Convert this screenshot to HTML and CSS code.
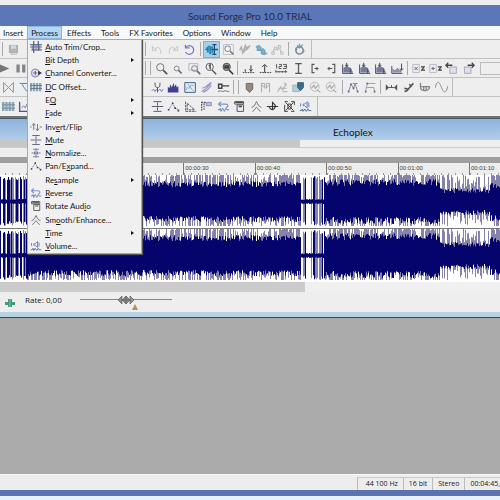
FILE: index.html
```html
<!DOCTYPE html>
<html lang="en">
<head>
<meta charset="utf-8">
<title>Sound Forge Pro 10.0 TRIAL</title>
<link rel="stylesheet" href="styles.css">
</head>
<body>
<svg class="sprite" aria-hidden="true">
    <symbol id="save" viewBox="0 0 16 16"><path d="M3 3h10v9H3z" fill="#b4b7ba" stroke="#a4a7aa"/><path d="M5 3h6v4H5z" fill="#dadcdd" stroke="none"/><path d="M5 14h7" stroke="#aaa" stroke-dasharray="2 1"/></symbol>
    <symbol id="play" viewBox="0 0 16 16"><path d="M2 3l12 5-12 5z" fill="#777" stroke="none"/></symbol>
    <symbol id="pause" viewBox="0 0 16 16"><path d="M3 3h4v10H3zM10 3h4v10h-4z" fill="#808388" stroke="none"/></symbol>
    <symbol id="mirror" viewBox="0 0 16 16"><path d="M2 2v12l6-6zM14 2v12L8 8z" stroke="#8a8f98"/></symbol>
    <symbol id="tri" viewBox="0 0 16 16"><path d="M2 3h12M5 4l5 8h5" stroke="#5d7db0"/></symbol>
    <symbol id="undo" viewBox="0 0 16 16"><path d="M3 4v5h5L3 4zM6 7c4-3 8-1 7 6" stroke="#c3c6c9"/></symbol>
    <symbol id="redo" viewBox="0 0 16 16"><path d="M13 4v5H8l5-5zM10 7c-4-3-8-1-7 6" stroke="#c3c6c9"/></symbol>
    <symbol id="repeat" viewBox="0 0 16 16"><path d="M4 5c4-4 10 0 9 5-2 5-8 5-10 1M3 2v4h5" stroke="#7779c0" stroke-width="1.5"/></symbol>
    <symbol id="edit" viewBox="0 0 16 16"><path d="M0 8h2V6h1v5h1V4h2v9h1V5h2v7h1" stroke="#2583b4" stroke-width="1.5"/><path d="M9 2h5M9 14h5M11.500 2v12M8 8h8" stroke="#28506e" stroke-width="1.6"/></symbol>
    <symbol id="magbox" viewBox="0 0 16 16"><path d="M2 2h12v12H2z" stroke="#bcbec2" fill="#f4f4f5"/><circle cx="7" cy="7" r="3.500" stroke="#777c85"/><path d="M10 10l4 4" stroke="#777c85" stroke-width="2"/></symbol>
    <symbol id="pencil" viewBox="0 0 16 16"><path d="M2 9l2-4 2 7 3-9 2 5 4-5M5 13l8-9" stroke="#aaaeb2" stroke-width="1.700"/></symbol>
    <symbol id="event" viewBox="0 0 16 16"><path d="M1 5h2V3v6h2V2v7h2V4v5h3M6 9h2V7v6h2V6v8h2V8v5h3" stroke="#6fa5c2" stroke-width="1.800"/></symbol>
    <symbol id="env" viewBox="0 0 16 16"><path d="M2 12l3-6 3 3 2-6 2 8 3 2" stroke="#b0b3b6"/><path d="M1 11h3v3H1zM4 5h3v3H4zM9 3h3v3H9zM12 11h3v3h-3z" stroke="#a6a9ac" fill="#eee" stroke-width=".8"/></symbol>
    <symbol id="gear" viewBox="0 0 16 16"><circle cx="8" cy="9" r="4.500" stroke="#8288a4" stroke-width="2"/><path d="M8 1v5M5 3l3 3 4-4M12 12l2-3M3 6l2 3" stroke="#7398a4" stroke-width="1.500"/></symbol>
    <symbol id="zoom" viewBox="0 0 16 16"><circle cx="6.500" cy="6.500" r="4.500" stroke="#6f747c"/><path d="M10 10l5 5" stroke="#555" stroke-width="2"/></symbol>
    <symbol id="zooms" viewBox="0 0 16 16"><circle cx="7" cy="8" r="3" stroke="#80858c"/><path d="M9 10l4 4" stroke="#666" stroke-width="1.800"/></symbol>
    <symbol id="zoomsel" viewBox="0 0 16 16"><path d="M1 2h11v8H1z" stroke="#b0a9c5" stroke-width="1"/><circle cx="8" cy="8" r="3.500" stroke="#777c88"/><path d="M11 11l4 4" stroke="#666" stroke-width="2"/></symbol>
    <symbol id="zoom1" viewBox="0 0 16 16"><circle cx="7" cy="6" r="4.500" stroke="#5d6066"/><path d="M6 5l1.500-1.500V9M10 10l5 5" stroke="#444" stroke-width="1.600"/></symbol>
    <symbol id="zoom2" viewBox="0 0 16 16"><circle cx="7" cy="6" r="4.500" stroke="#4c4f54" fill="#999"/><path d="M4 5h6M4 7h6M10 10l5 5" stroke="#333" stroke-width="1.800"/></symbol>
    <symbol id="mark1" viewBox="0 0 16 16"><path d="M1 13h14" stroke="#444" stroke-dasharray="2 1"/><path d="M11 4v8M9 9l2 2 2-2M4 9v3" stroke="#333"/></symbol>
    <symbol id="mark2" viewBox="0 0 16 16"><path d="M1 13h14" stroke="#444" stroke-dasharray="2 1"/><path d="M7 13V4M4 6l3-3 3 3" stroke="#333"/></symbol>
    <symbol id="count" viewBox="0 0 16 16"><path d="M1 4l1-1v5M5 3h3v2.500H5V8h3M10 3h4v5h-4M11 5.500h3" stroke="#555"/><path d="M1 12h14M1 10v3M5 11v2M9 11v2M13 10v3" stroke="#555"/></symbol>
    <symbol id="ibeam" viewBox="0 0 16 16"><path d="M4 2h8M4 14h8M8 2v12" stroke="#555" stroke-width="1.500"/></symbol>
    <symbol id="brl" viewBox="0 0 16 16"><path d="M8 3H5v10h3M8 8h5M11 6v4" stroke="#555" stroke-width="1.400"/></symbol>
    <symbol id="brr" viewBox="0 0 16 16"><path d="M9 3h3v10H9M9 8H3M5 6v4" stroke="#555" stroke-width="1.400"/></symbol>
    <symbol id="hist" viewBox="0 0 16 16"><path d="M3 13V7l2-1 2-2 2 2 3 1 1 3 2 3z" fill="#777b99" stroke="none"/><path d="M2 3v11h13M7 1v5M5 4h4M12 8v6" stroke="#44485c"/></symbol>
    <symbol id="hist2" viewBox="0 0 16 16"><path d="M2 13V8l3 2 3-3 3 3 2-3v6z" fill="#8d91ac" stroke="none"/><path d="M1 5v9h13M13 2v8M11 8l2 2 2-2" stroke="#44485c"/></symbol>
    <symbol id="xz" viewBox="0 0 16 16"><path d="M1 3h8v10H1z" stroke="#b9bcc9"/><path d="M3 6l4 4M7 6l-4 4" stroke="#667"/><path d="M11 6h4l-3 4h4" stroke="#444" stroke-width="1.500"/></symbol>
    <symbol id="pz" viewBox="0 0 16 16"><path d="M1 3h8v10H1z" stroke="#b9bcc9"/><path d="M3 8h4M5 6v4" stroke="#667"/><path d="M11 6h4l-3 4h4" stroke="#444" stroke-width="1.500"/></symbol>
    <symbol id="boxl" viewBox="0 0 16 16"><path d="M6 6h8v8H6z" stroke="#aab" fill="#dde0e8"/><path d="M1 4h8M4 1L1 4l3 3" stroke="#444" stroke-width="1.600"/></symbol>
    <symbol id="boxr" viewBox="0 0 16 16"><path d="M3 6h8v8H3z" stroke="#aab" fill="#dde0e8"/><path d="M7 4h8M12 1l3 3-3 3" stroke="#444" stroke-width="1.600"/></symbol>
    <symbol id="tuner" viewBox="0 0 16 16"><path d="M5 2v3c0 4 6 4 6 0V2M8 8v6" stroke="#555"/><path d="M1 12l2-2 2 3 2-3M9 12l2-2 2 3 2-3" stroke="#6c74b8"/></symbol>
    <symbol id="spect" viewBox="0 0 16 16"><path d="M1 14V7l2 2 1-5 2 4 2-6 1 5 2-3 1 4 2-2v8z" fill="#40418e" stroke="none"/></symbol>
    <symbol id="scope" viewBox="0 0 16 16"><path d="M1 2h13v12H1z" stroke="#416180" fill="#e0edf5"/><path d="M3 11c1-7 3 1 4-3s3-3 5-2M5 4l6 8" stroke="#77a5cb"/></symbol>
    <symbol id="stack" viewBox="0 0 16 16"><path d="M2 13l5-3 7-8M3 9l4-2 6-5M4 14l5-3 5-6" stroke="#9b96c8" stroke-width="1.500"/></symbol>
    <symbol id="hammer" viewBox="0 0 16 16"><path d="M2 4h4v5H2zM6 6h9" stroke="#444" stroke-width="1.800"/><path d="M1 13l3-1 3 1 3-1 5 1" stroke="#53859f"/></symbol>
    <symbol id="shield" viewBox="0 0 16 16"><path d="M4 3h8v7l-4 4-4-4z" fill="#95897d" stroke="#756a62"/></symbol>
    <symbol id="gate" viewBox="0 0 16 16"><path d="M3 14V3h4v6L4 5M13 14V3H9v6l3-4" stroke="#aaa"/></symbol>
    <symbol id="sparks" viewBox="0 0 16 16"><path d="M2 13l4-6 2 4 5-8M3 9h10M8 13h6M10 2l3 4" stroke="#b8bbbd" stroke-width="1.600"/></symbol>
    <symbol id="shield2" viewBox="0 0 16 16"><path d="M1 5h8v8H1z" fill="#b9cbd6" stroke="#9eb4bf"/><path d="M7 2h7v6l-3.500 4L7 8z" fill="#396f8b" stroke="#33627d"/></symbol>
    <symbol id="disc" viewBox="0 0 16 16"><circle cx="7" cy="7" r="5.500" stroke="#bbb"/><path d="M3 9l3-4 2 4 3-4M10 11l4 3" stroke="#aaa" stroke-width="1.500"/></symbol>
    <symbol id="nodes" viewBox="0 0 16 16"><path d="M2 13l3-9 3 5 2-6 3 10M7 3h6" stroke="#85899c"/><path d="M1 12h2v2H1zM4 3h2v2H4zM7 8h2v2H7zM12 12h2v2h-2z" fill="#596080" stroke="none"/></symbol>
    <symbol id="nodes2" viewBox="0 0 16 16"><path d="M2 13l2-10h10M4 8h8l1 5" stroke="#9a9da6"/><path d="M1 12h2v2H1zM3 2h2v2H3zM12 12h2v2h-2z" fill="#596080" stroke="none"/></symbol>
    <symbol id="span" viewBox="0 0 16 16"><path d="M1 4v8l4-4zM15 4v8l-4-4z" fill="#555" stroke="none"/><path d="M5 8h6M8 5v3" stroke="#555"/></symbol>
    <symbol id="diag" viewBox="0 0 16 16"><path d="M3 13l3-1 6-7 2-2M3 9l4 1M9 4l3 3" stroke="#555" stroke-width="2"/></symbol>
    <symbol id="midi" viewBox="0 0 16 16"><path d="M3 2v5c0 6 9 6 11 2V7H4M7 7v4M10 7v4" stroke="#808388" stroke-width="1.500"/></symbol>
    <symbol id="sine" viewBox="0 0 16 16"><path d="M0 9C3-4 6 3 8 8s5 10 8-2" stroke="#85888c"/></symbol>
    <symbol id="lines" viewBox="0 0 16 16"><path d="M3 2h10M1 8h14M3 14h10M8 3v4M8 9v4" stroke="#555d70"/></symbol>
    <symbol id="norm" viewBox="0 0 16 16"><path d="M2 8h12M4 3h8M4 13h8M8 2v12M6 6v4M10 6v4" stroke="#6c7c9c"/></symbol>
    <symbol id="pan" viewBox="0 0 16 16"><path d="M2 12l5-8 3 6 5 2" stroke="#767d8e" stroke-dasharray="2 1"/><path d="M1 11h2v2H1zM6 3h2v2H6zM9 9h2v2H9zM13 12h2v2h-2z" fill="#33415c" stroke="none"/></symbol>
    <symbol id="graph" viewBox="0 0 16 16"><path d="M2 2v12h13M4 12V4l9 8z" stroke="#555" stroke-dasharray="3 1"/></symbol>
    <symbol id="graphb" viewBox="0 0 16 16"><path d="M2 2v12h13" stroke="#4b519c" stroke-width="1.600"/><path d="M4 10l3-3 2 3 2-5 2 4" stroke="#7d83bb"/></symbol>
    <symbol id="flag" viewBox="0 0 16 16"><path d="M2 2v12M2 3h6v4M5 4v9" stroke="#555" stroke-width="1.500" stroke-dasharray="2 1"/><path d="M8 3h6v4H8z" fill="#b9bce1" stroke="#8c91c4"/></symbol>
    <symbol id="rev" viewBox="0 0 16 16"><path d="M5 2L2 5l3 3M2 5h9c3 0 3 4 0 4" stroke="#7c92d0" stroke-width="1.500"/><path d="M1 12h2l1-2 1 4 2-4 2 4 2-4 1 2h3" stroke="#6185b0"/></symbol>
    <symbol id="rot" viewBox="0 0 16 16"><path d="M2 2h11v3H2zM5 6h8v8H5z" stroke="#555"/><path d="M3 3h9M7 8h4" stroke="#444" stroke-width="1.600"/></symbol>
    <symbol id="smooth" viewBox="0 0 16 16"><path d="M2 9c4-1 4-4 6-7 2 3 2 6 6 7M3 14c3-1 3-4 5-5 2 1 2 4 5 5" stroke="#66696e"/></symbol>
    <symbol id="time" viewBox="0 0 16 16"><path d="M1 8h14M4 9c4 7 9-1 7-3l-3-3v8" stroke="#333" stroke-width="1.400"/></symbol>
    <symbol id="cross" viewBox="0 0 16 16"><path d="M2 2h4M10 2h4v4M2 6v8h4M10 14h4M3 3l10 10M13 3L3 13M6 5h4v6H6z" stroke="#444"/></symbol>
    <symbol id="vol" viewBox="0 0 16 16"><path d="M5 5h2l3-3v8L7 7H5zM12 3v6M2 4v4" stroke="#6b80c4"/><path d="M1 13h2l1-2 1 3 2-3 2 3 2-3 1 2h3" stroke="#526d9c"/></symbol>
    <symbol id="dc" viewBox="0 0 16 16"><path d="M0 4h16M0 8h16M0 12h16" stroke="#8aa6b5" stroke-width="3" stroke-dasharray="3 1"/><path d="M0 6h16M0 10h16" stroke="#56758b"/></symbol>
    <symbol id="trim" viewBox="0 0 16 16"><path d="M5 0v16M11 0v13M0 5h16M2 12h14" stroke="#4a5368" stroke-width="1.500"/><path d="M0 8h16M3 6v6M8 4v8M13 6v6" stroke="#5b67a7"/></symbol>
    <symbol id="chan" viewBox="0 0 16 16"><circle cx="7" cy="8" r="5" stroke="#9d9ac9" stroke-width="2"/><path d="M4 8h6M7 5v6" stroke="#635f91" stroke-width="1.500"/><path d="M11 5l5 3-5 3z" fill="#333" stroke="none"/></symbol>
    <symbol id="inv" viewBox="0 0 16 16"><path d="M5 12V4M3 6l2-3 2 3M10 4v8M8 10l2 3 2-3M0 8h2M13 8h3" stroke="#6a7389"/></symbol>
</svg>

<header class="titlebar"><h1>Sound Forge Pro 10.0 TRIAL</h1></header>

<nav class="menubar" aria-label="Main menu">
  <button>Insert</button>
  <div class="menu-host">
    <button class="open" aria-expanded="true">Process</button>
    <div class="menu" role="menu">
      <button role="menuitem" data-icon="trim"><span><u>A</u>uto Trim/Crop...</span></button>
      <button role="menuitem" class="sub"><span><u>B</u>it Depth</span></button>
      <button role="menuitem" data-icon="chan"><span><u>C</u>hannel Converter...</span></button>
      <button role="menuitem" data-icon="dc"><span><u>D</u>C Offset...</span></button>
      <button role="menuitem" class="sub"><span>E<u>Q</u></span></button>
      <button role="menuitem" class="sub"><span><u>F</u>ade</span></button>
      <button role="menuitem" data-icon="inv"><span>Inv<u>e</u>rt/Flip</span></button>
      <button role="menuitem" data-icon="lines"><span><u>M</u>ute</span></button>
      <button role="menuitem" data-icon="norm"><span><u>N</u>ormalize...</span></button>
      <button role="menuitem" data-icon="pan"><span>Pan/E<u>x</u>pand...</span></button>
      <button role="menuitem" class="sub"><span>Re<u>s</u>ample</span></button>
      <button role="menuitem" data-icon="rev"><span><u>R</u>everse</span></button>
      <button role="menuitem" data-icon="rot"><span>Rotate Aud<u>i</u>o</span></button>
      <button role="menuitem" data-icon="smooth"><span>Sm<u>o</u>oth/Enhance...</span></button>
      <button role="menuitem" class="sub"><span><u>T</u>ime</span></button>
      <button role="menuitem" data-icon="vol"><span><u>V</u>olume...</span></button>
    </div>
  </div>
  <button>Effects</button>
  <button>Tools</button>
  <button>FX Favorites</button>
  <button>Options</button>
  <button>Window</button>
  <button>Help</button>
</nav>

<div class="toolbars">
  <div class="toolbar">
    <div class="lead" data-icons="sep save"></div>
    <div class="group" data-icons="sep undo redo repeat"></div>
    <div class="group" data-icons="sep edit magbox pencil event env"></div>
    <div class="group last" data-icons="sep gear"></div>
  </div>
  <div class="toolbar">
    <div class="lead tight" data-icons="play pause"></div>
    <div class="group" data-icons="sep sep zoom zooms zoomsel zoom1 zoom2"></div>
    <div class="group" data-icons="sep mark1 mark2 count ibeam brl brr hist hist hist hist2"></div>
    <div class="group" data-icons="sep xz pz boxl boxr"></div>
    <div class="well"></div>
  </div>
  <div class="toolbar">
    <div class="lead" data-icons="mirror tri"></div>
    <div class="group inset" data-icons="tuner spect scope stack hammer"></div>
    <div class="group" data-icons="sep sep shield gate sparks shield2 disc disc"></div>
    <div class="group" data-icons="sep nodes nodes2"></div>
    <div class="group last" data-icons="sep span diag midi sine"></div>
  </div>
  <div class="toolbar">
    <div class="lead" data-icons="dc graphb"></div>
    <div class="group inset last" data-icons="lines pan graph flag rev rot smooth time cross vol"></div>
  </div>
</div>

<main class="workspace">
  <section class="document">
    <h2 class="doc-title">Echoplex</h2>
    <div class="overview"><div class="thumb"></div></div>
    <div class="gap"></div>
    <div class="divider"></div>
    <div class="ruler">
      <span></span><span></span><span></span><span>00:00:30</span><span>00:00:40</span><span>00:00:50</span><span>00:01:00</span><span>00:01:10</span>
    </div>
    <svg class="wave" viewBox="0 0 500 53" preserveAspectRatio="none" data-seed="7"></svg>
    <svg class="wave" viewBox="0 0 500 53" preserveAspectRatio="none" data-seed="7"></svg>
    <div class="scroll"><div class="thumb"></div></div>
    <div class="transport">
      <svg class="plus" viewBox="0 0 12 10"><path d="M1 4h10v3H1zM4 1h4v8H4z" fill="#3f9b7c"/><path d="M6 1v8" stroke="#7fc3a5"/></svg>
      <label for="rate">Rate: 0,00</label>
      <div class="slider">
        <input id="rate" type="range" min="-100" max="100" value="0">
        <svg class="handle" viewBox="0 0 18 10"><path d="M1 5l4-4v8zM17 5l-4-4v8zM5 5l4-4 4 4-4 4z" fill="#8b8f8d" stroke="#5b5f5d" stroke-width=".7"/><path d="M6 5h6M9 1v8" stroke="#666"/></svg>
        <svg class="marker" viewBox="0 0 6 6"><path d="M3 0l3 6H0z" fill="#bb8d57"/></svg>
      </div>
    </div>
  </section>
</main>

<footer class="status">
  <span>44 100 Hz</span><span>16 bit</span><span>Stereo</span><span class="length">00:04:45,</span>
</footer>
<script src="app.js"></script>
</body>
</html>
```
FILE: styles.css
```css
* { box-sizing: border-box; }
body {
  margin: 0;
  min-height: 100vh;
  display: flex;
  flex-direction: column;
  overflow: hidden;
  background: #ededed;
  color: #161616;
  font: 8px/12px Lato, "Open Sans", sans-serif;
  border-top: 5px solid #eeeeee;
  border-bottom: 4px solid #e9f1f6;
}
button {
  border: 0;
  padding: 0;
  margin: 0;
  background: none;
  color: inherit;
  font: inherit;
}
.sprite { position: absolute; width: 0; height: 0; }
.icon { fill: none; stroke: #4c5568; stroke-width: 1.2; }

.titlebar { background: #5b77b7; height: 21px; }
.titlebar h1 {
  margin: 0;
  font-size: 10px;
  line-height: 22px;
  font-weight: 400;
  text-align: center;
  color: #202c49;
}

.menubar {
  display: flex;
  height: 14px;
  background: #f7f9f9;
  border-bottom: 1px solid #b5b7b3;
  white-space: nowrap;
}
.menubar > button { padding: 0 5px; }
.menubar > button:first-child { padding: 0 4px 0 3px; }
.menu-host { position: relative; display: flex; }
.menu-host > .open {
  padding: 0 3px;
  border: 1px solid #8db6dc;
  background: #b5d6f2;
}
.menu {
  position: absolute;
  top: 13px;
  left: 0;
  z-index: 2;
  width: 115px;
  height: 215px;
  display: grid;
  grid-auto-rows: 1fr;
  background: #f0f0f0;
  border: 1px solid #a6a8aa;
  box-shadow: 1px 1px 1px #555;
}
.menu button {
  display: grid;
  grid-template-columns: 15px 1fr 8px;
  align-items: center;
  padding: 0 2px;
  text-align: left;
}
.menu button > span { grid-column: 2; }
.menu svg { width: 12px; height: 12px; grid-row: 1; }
.menu .sub::after {
  content: "";
  border: 2px solid transparent;
  border-left: 3px solid #111;
}

.toolbars {
  background: #eeeeee;
  border-bottom: 2px solid #6c7375;
}
.toolbar {
  display: flex;
  height: 19px;
  overflow: hidden;
  border-bottom: 1px solid #c2c3c1;
}
.toolbar:last-child { border-bottom: 0; }
.lead { display: flex; flex: 0 0 143px; align-items: center; }
.lead.tight { flex-basis: 147px; margin-left: -4px; }
.group { display: flex; flex: none; align-items: center; }
.group.inset { padding-left: 6px; }
.group.last { padding-right: 3px; border-right: 1px solid #bcbdbb; }
.toolbar button { height: 17px; flex: 0 0 16px; }
.toolbar .group button:nth-child(even) { flex-basis: 17px; }
.toolbar button svg { display: block; width: 13px; height: 13px; margin: 0 auto; }
.toolbar button.edit { background: #a7d0ee; border: 1px solid #79aed8; }
.sep { flex: none; width: 1px; height: 14px; margin: 0 2px; background: #aaa; }
.well {
  flex: 1;
  height: 13px;
  margin: 3px 0 0 4px;
  border: 1px solid #bbb;
  border-right: 0;
}

.workspace { flex: 1; background: #ababab; }
.document {
  border-top: 1px solid #4b5a5c;
  border-bottom: 1px solid #24525d;
  background: #eeeeee;
}
.doc-title {
  margin: 0;
  height: 21px;
  padding: 3px 0 0 333px;
  font-size: 10px;
  line-height: 20px;
  font-weight: 400;
  background: linear-gradient(#8eb2db, #b2cde9);
}
.overview { height: 8px; background: #efefef; border-bottom: 1px solid #ccc; }
.overview .thumb { width: 60%; height: 7px; background: #c7c7c7; }
.gap { height: 9px; }
.divider { height: 6px; background: #9f9f9f; }
.ruler {
  display: flex;
  height: 12px;
  overflow: hidden;
  background: #ededed;
}
.ruler span {
  flex: 0 0 calc(100% / 7);
  padding-left: 1px;
  font: 6px/10px "Liberation Sans", sans-serif;
  color: #35452f;
  border-left: 1px solid #777;
  background: repeating-linear-gradient(90deg, #999 0 1px, transparent 1px 7px) 0 100% / 100% 2px no-repeat;
}
.ruler span:first-child { margin-left: -31px; }
.wave {
  display: block;
  width: 100%;
  height: 53px;
  background: #fff;
}
.wave + .wave { border-top: 1px solid #777; height: 54px; }
.scroll { height: 10px; background: #f0f0f0; }
.scroll .thumb { width: 61%; height: 10px; background: #cbcbcb; }
.transport {
  display: flex;
  align-items: flex-start;
  height: 25px;
  padding: 2px 4px;
  border-bottom: 5px solid #b6d3e4;
}
.plus { width: 12px; height: 10px; margin-top: 4px; }
.transport label { margin-left: 9px; font-family: "Open Sans", sans-serif; }
.slider { position: relative; width: 92px; height: 16px; margin-left: 18px; }
.slider input {
  appearance: none;
  width: 100%;
  height: 1px;
  margin: 5px 0 0;
  display: block;
  background: #888;
}
.slider input::-webkit-slider-thumb { appearance: none; width: 1px; height: 1px; }
.handle { position: absolute; left: 37px; top: 1px; width: 18px; height: 10px; }
.marker { position: absolute; left: 52px; top: 10px; width: 6px; height: 6px; }

.status {
  display: flex;
  justify-content: flex-end;
  height: 22px;
  padding-top: 2px;
  border-top: 1px solid #f8f8f8;
  border-bottom: 6px solid #5b74b1;
  font-family: "Open Sans", sans-serif;
  font-size: 7px;
  white-space: nowrap;
}
.status span { padding: 0 5px; border-left: 1px solid #bbb; border-top: 1px solid #ccc; }
.status span:first-child { padding-left: 8px; }
.status .length { padding-right: 0; }
```
FILE: app.js
```js
const NS = "http://www.w3.org/2000/svg";

function icon(name) {
  const svg = document.createElementNS(NS, "svg");
  svg.setAttribute("class", "icon");
  const use = document.createElementNS(NS, "use");
  use.setAttribute("href", "#" + name);
  svg.append(use);
  return svg;
}

document.querySelectorAll("[data-icons]").forEach(group => {
  group.dataset.icons.split(" ").forEach(name => {
    if (name === "sep") {
      const sep = document.createElement("i");
      sep.className = "sep";
      group.append(sep);
      return;
    }
    const button = document.createElement("button");
    button.className = name;
    button.setAttribute("aria-label", name);
    button.append(icon(name));
    group.append(button);
  });
});

document.querySelectorAll("[data-icon]").forEach(item => item.prepend(icon(item.dataset.icon)));

// Envelope sections: start, end, core half-height, variation, sparse.
const sections = [
  [0, 28, 1, 1, true],
  [28, 301, 14, 6, false],
  [301, 325, 1, 1, true],
  [325, 440, 15, 7, false],
  [440, 490, 8, 5, false],
  [490, 500, 13, 6, false]
];

document.querySelectorAll(".wave").forEach(svg => {
  let state = Number(svg.dataset.seed);
  const random = () => (state = (state * 16807) % 2147483647) / 2147483647;
  let core = "", peaks = "";
  for (const [from, to, height, spread, sparse] of sections) {
    for (let x = from; x < to; x++) {
      const up = height + random() * spread;
      const down = height + 1 + random() * spread;
      core += `M${x} ${26 - up}h1V${26 + down}h-1z`;
      if (sparse) {
        const r = random();
        const bar = `M${x} ${1 + random() * 4}h1V${46 + random() * 5}h-1z`;
        if (r < 0.3) core += bar;
        else if (r < 0.75) peaks += bar;
      } else {
        const top = random() < 0.75 ? Math.min(26, up + 2 + random() * 16) : up;
        const bottom = random() < 0.7 ? Math.min(25, down + random() * 12) : down;
        peaks += `M${x} ${26 - top}h1V${26 + bottom}h-1z`;
      }
    }
  }
  for (const [d, fill] of [[peaks, "#8582ad"], [core, "#04046c"]]) {
    const path = document.createElementNS(NS, "path");
    path.setAttribute("d", d);
    path.setAttribute("fill", fill);
    svg.append(path);
  }
});
```
